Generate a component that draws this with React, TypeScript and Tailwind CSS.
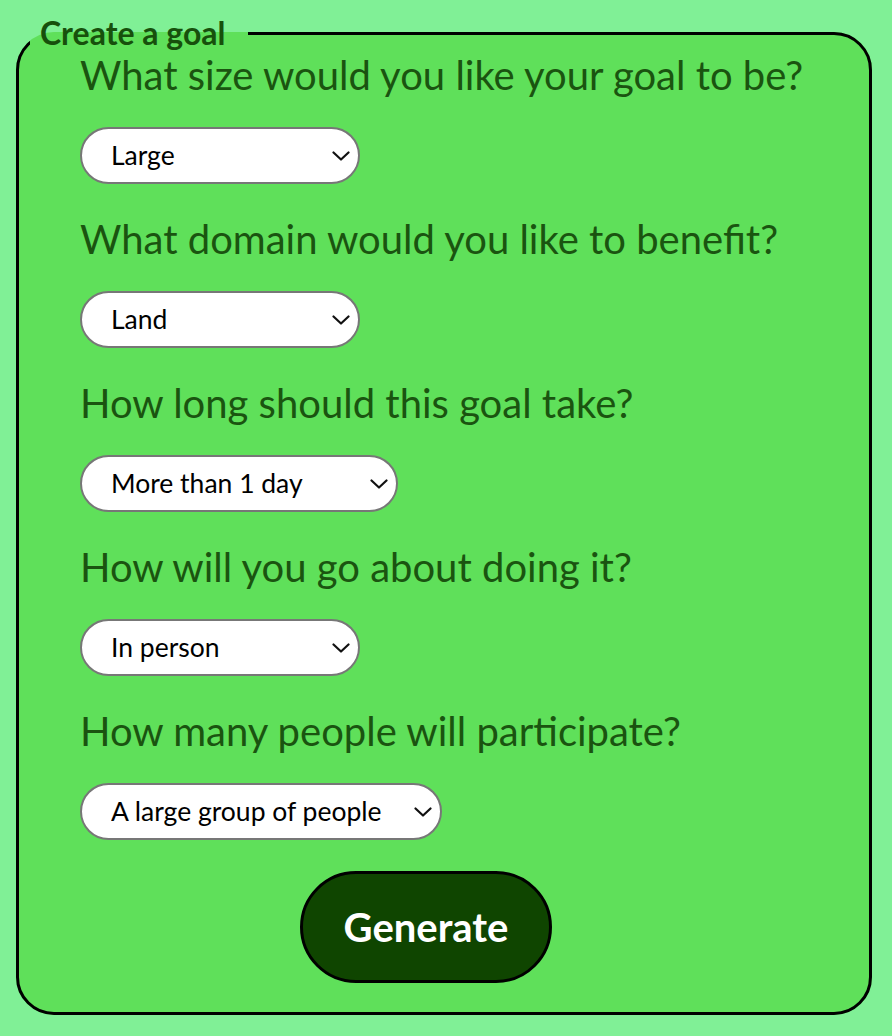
import { useState } from 'react'

const questions = [
  { q: 'What size would you like your goal to be?', options: ['Small', 'Medium', 'Large'], value: 'Large', w: 'w-[280px]' },
  { q: 'What domain would you like to benefit?', options: ['Land', 'Sea', 'Air'], value: 'Land', w: 'w-[280px]' },
  { q: 'How long should this goal take?', options: ['Less than 1 day', 'More than 1 day'], value: 'More than 1 day', w: 'w-[318px]' },
  { q: 'How will you go about doing it?', options: ['In person', 'Online'], value: 'In person', w: 'w-[280px]' },
  { q: 'How many people will participate?', options: ['Just me', 'A small group of people', 'A large group of people'], value: 'A large group of people', w: 'w-[362px]' },
]

function Chevron() {
  return (
    <svg viewBox="0 0 18 10" className="pointer-events-none absolute right-[10px] top-1/2 h-[10px] w-[18px] -translate-y-1/2">
      <path d="M1.5 1.5 L9 8.5 L16.5 1.5" fill="none" stroke="#111" strokeWidth="2.2" strokeLinecap="round" strokeLinejoin="round" />
    </svg>
  )
}

export default function App() {
  const [values, setValues] = useState(questions.map((q) => q.value))

  return (
    <div className="min-h-screen bg-[#80f096] pl-[16px] pr-[20px] pt-[13px] font-['Lato',sans-serif]">
      <fieldset className="h-[1002px] rounded-[38px] border-[3px] border-black bg-[#5fe05a] pl-[61px] pr-0 pb-[28px]">
        <legend className="ml-[-50px] pl-[10px] pr-[22px] text-[32px] font-bold leading-[40px] text-[#17500c]">Create a goal</legend>
        <div className="flex flex-col">
          {questions.map((item, i) => (
            <div key={i} className="flex flex-col">
              <h2 className={`${i === 0 ? 'mt-[-2px]' : 'mt-[31px]'} text-[40px] leading-[48px] text-[#1a5410]`}>{item.q}</h2>
              <div className={`relative mt-[28px] ${item.w}`}>
                <select
                  value={values[i]}
                  onChange={(e) => setValues(values.map((v, j) => (j === i ? e.target.value : v)))}
                  className="h-[57px] w-full appearance-none rounded-full border-2 border-[#777] bg-white pl-[29px] text-[26.5px] text-black outline-none"
                >
                  {item.options.map((o) => (
                    <option key={o}>{o}</option>
                  ))}
                </select>
                <Chevron />
              </div>
            </div>
          ))}
          <button className="ml-[220px] mt-[31px] h-[112px] w-[252px] rounded-full border-[3px] border-black bg-[#0f4500] text-[40px] font-bold text-white">
            Generate
          </button>
        </div>
      </fieldset>
    </div>
  )
}
